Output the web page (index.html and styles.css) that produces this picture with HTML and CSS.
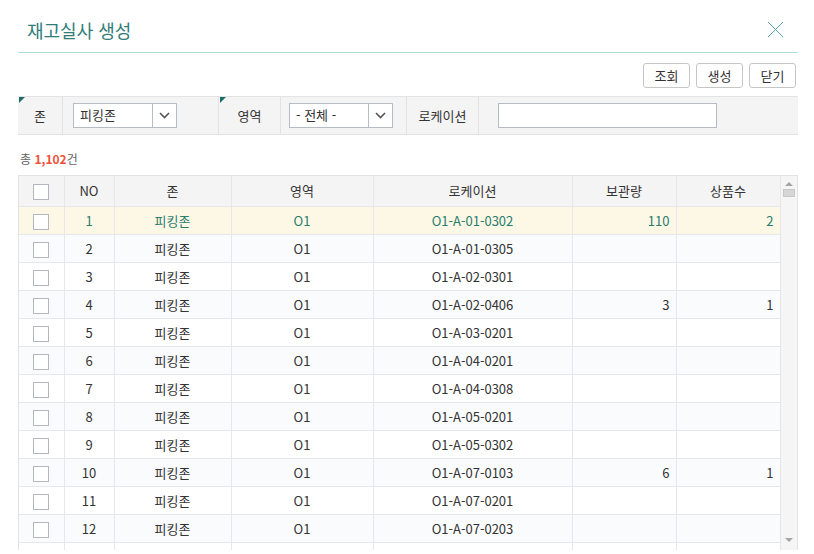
FILE: index.html
```html
<!DOCTYPE html>
<html lang="ko">
<head>
<meta charset="utf-8">
<title>재고실사 생성</title>
<link rel="stylesheet" href="styles.css">
</head>
<body>
<div class="dialog">
  <div class="dlg-head">
    <h1 class="dlg-title">재고실사 생성</h1>
    <button class="dlg-close" aria-label="닫기">
      <svg width="17" height="17" viewBox="0 0 17 17"><path d="M1 1L16 16M16 1L1 16" stroke="#5aa6a2" stroke-width="1" fill="none"/></svg>
    </button>
  </div>

  <div class="toolbar">
    <button class="btn">조회</button>
    <button class="btn">생성</button>
    <button class="btn">닫기</button>
  </div>

  <div class="filter">
    <div class="f-label req w-zone">존</div>
    <div class="f-field w-zone-f">
      <div class="select"><span class="sel-text">피킹존</span><span class="sel-arrow"><svg width="11" height="7" viewBox="0 0 11 7"><path d="M1 1L5.5 5.5L10 1" stroke="#555" stroke-width="1.6" fill="none"/></svg></span></div>
    </div>
    <div class="f-label req w-area">영역</div>
    <div class="f-field w-area-f">
      <div class="select"><span class="sel-text">- 전체 -</span><span class="sel-arrow"><svg width="11" height="7" viewBox="0 0 11 7"><path d="M1 1L5.5 5.5L10 1" stroke="#555" stroke-width="1.6" fill="none"/></svg></span></div>
    </div>
    <div class="f-label w-loc">로케이션</div>
    <div class="f-field w-loc-f">
      <input class="text-input" type="text">
    </div>
  </div>

  <div class="count">총 <b>1,102</b>건</div>

  <div class="grid">
    <div class="grid-body">
      <table>
        <colgroup>
          <col class="c-chk"><col class="c-no"><col class="c-zone"><col class="c-area"><col class="c-loc"><col class="c-qty"><col class="c-cnt">
        </colgroup>
        <thead>
          <tr><th><span class="chk"></span></th><th>NO</th><th>존</th><th>영역</th><th>로케이션</th><th>보관량</th><th>상품수</th></tr>
        </thead>
        <tbody>
          <tr class="sel"><td><span class="chk"></span></td><td>1</td><td>피킹존</td><td>O1</td><td>O1-A-01-0302</td><td class="num">110</td><td class="num">2</td></tr>
          <tr><td><span class="chk"></span></td><td>2</td><td>피킹존</td><td>O1</td><td>O1-A-01-0305</td><td class="num"></td><td class="num"></td></tr>
          <tr><td><span class="chk"></span></td><td>3</td><td>피킹존</td><td>O1</td><td>O1-A-02-0301</td><td class="num"></td><td class="num"></td></tr>
          <tr><td><span class="chk"></span></td><td>4</td><td>피킹존</td><td>O1</td><td>O1-A-02-0406</td><td class="num">3</td><td class="num">1</td></tr>
          <tr><td><span class="chk"></span></td><td>5</td><td>피킹존</td><td>O1</td><td>O1-A-03-0201</td><td class="num"></td><td class="num"></td></tr>
          <tr><td><span class="chk"></span></td><td>6</td><td>피킹존</td><td>O1</td><td>O1-A-04-0201</td><td class="num"></td><td class="num"></td></tr>
          <tr><td><span class="chk"></span></td><td>7</td><td>피킹존</td><td>O1</td><td>O1-A-04-0308</td><td class="num"></td><td class="num"></td></tr>
          <tr><td><span class="chk"></span></td><td>8</td><td>피킹존</td><td>O1</td><td>O1-A-05-0201</td><td class="num"></td><td class="num"></td></tr>
          <tr><td><span class="chk"></span></td><td>9</td><td>피킹존</td><td>O1</td><td>O1-A-05-0302</td><td class="num"></td><td class="num"></td></tr>
          <tr><td><span class="chk"></span></td><td>10</td><td>피킹존</td><td>O1</td><td>O1-A-07-0103</td><td class="num">6</td><td class="num">1</td></tr>
          <tr><td><span class="chk"></span></td><td>11</td><td>피킹존</td><td>O1</td><td>O1-A-07-0201</td><td class="num"></td><td class="num"></td></tr>
          <tr><td><span class="chk"></span></td><td>12</td><td>피킹존</td><td>O1</td><td>O1-A-07-0203</td><td class="num"></td><td class="num"></td></tr>
          <tr class="partial"><td><span class="chk"></span></td><td></td><td></td><td></td><td></td><td class="num"></td><td class="num"></td></tr>
        </tbody>
      </table>
    </div>
    <div class="vscroll">
      <span class="arr-up"></span>
      <span class="thumb"></span>
      <span class="spacer"></span>
      <span class="arr-down"></span>
    </div>
  </div>
</div>
</body>
</html>
```

FILE: styles.css
```css
* { box-sizing: border-box; }
html, body { margin: 0; padding: 0; background: #fff; }
body {
  font-family: "Noto Sans CJK KR", "Noto Sans", sans-serif;
  font-size: 13px;
  color: #333;
  overflow: hidden;
}
.dialog {
  width: 780px;
  margin-left: 18px;
  height: 554px;
  display: flex;
  flex-direction: column;
}
.dlg-head {
  height: 53px;
  border-bottom: 1px solid #abdfd8;
  display: flex;
  align-items: center;
  justify-content: space-between;
  padding: 0 14px 0 9px;
}
.dlg-title {
  margin: 0;
  font-size: 18px;
  font-weight: 400;
  color: #2f7c78;
  line-height: 24px;
  padding-top: 7px;
}
.dlg-close {
  border: 0;
  background: none;
  padding: 0;
  width: 17px;
  height: 17px;
  margin-top: 7px;
  display: flex;
}
.toolbar {
  display: flex;
  justify-content: flex-end;
  gap: 6px;
  padding: 10px 2px 0 0;
}
.btn {
  width: 47px;
  height: 25px;
  border: 1px solid #c6c6c6;
  border-radius: 3px;
  background: #fff;
  font-family: inherit;
  font-size: 13px;
  color: #333;
  padding: 0;
  line-height: 22px;
}
.filter {
  margin-top: 8px;
  height: 39px;
  background: #f4f4f4;
  border-top: 1px solid #e3e3e3;
  border-bottom: 1px solid #e3e3e3;
  display: flex;
}
.f-label {
  position: relative;
  display: flex;
  align-items: center;
  justify-content: center;
  border-right: 1px solid #e2e2e2;
  color: #333;
}
.f-label.req::before {
  content: "";
  position: absolute;
  left: 1px;
  top: 0;
  border-top: 6px solid #1e6d69;
  border-right: 6px solid transparent;
}
.f-field {
  display: flex;
  align-items: center;
  border-right: 1px solid #e2e2e2;
}
.w-zone { width: 45px; }
.w-zone-f { width: 156px; padding-left: 10px; }
.w-area { width: 62px; }
.w-area-f { width: 126px; padding-left: 8px; }
.w-loc { width: 72px; }
.w-loc-f { flex: 1; padding-left: 19px; border-right: 0; }
.select {
  width: 104px;
  height: 25px;
  border: 1px solid #b7bbc5;
  background: #fff;
  display: flex;
}
.sel-text {
  flex: 1;
  padding-left: 6px;
  line-height: 22px;
}
.sel-arrow {
  width: 24px;
  border-left: 1px solid #b7bbc5;
  display: flex;
  align-items: center;
  justify-content: center;
}
.text-input {
  width: 219px;
  height: 25px;
  border: 1px solid #b7bbc5;
  background: #fff;
  margin: 0;
}
.count {
  font-size: 12px;
  color: #666;
  padding: 15px 0 0 2px;
  line-height: 18px;
  height: 40px;
}
.count b { color: #f0533a; font-weight: 700; }
.grid {
  display: flex;
  height: 375px;
  border: 1px solid #e3e3e3;
  border-bottom: 0;
}
.grid-body {
  width: 761px;
  overflow: hidden;
}
table {
  border-collapse: collapse;
  table-layout: fixed;
  width: 761px;
}
.c-chk { width: 45px; }
.c-no { width: 50px; }
.c-zone { width: 117px; }
.c-area { width: 142px; }
.c-loc { width: 199px; }
.c-qty { width: 104px; }
.c-cnt { width: 104px; }
th, td {
  border: 1px solid #e6e7ea;
  text-align: center;
  padding: 0 6px;
  font-weight: 400;
  white-space: nowrap;
}
tr > :first-child { border-left: 0; }
thead tr > th { border-top: 0; }
th {
  height: 30px;
  background: #f4f4f4;
  color: #333;
}
td {
  height: 28px;
  color: #333;
}
td.num { text-align: right; }
tbody tr:nth-child(even) { background: #fafbfd; }
tbody tr.sel { background: #fdf8e5; }
tbody tr.sel td { color: #2a7c6d; }
.chk {
  display: inline-block;
  width: 16px;
  height: 16px;
  border: 1px solid #b3b6bf;
  background: #fff;
  vertical-align: middle;
}
.vscroll {
  flex: 1;
  background: #f5f5f5;
  border-left: 1px solid #e6e6e6;
  display: flex;
  flex-direction: column;
  align-items: center;
  padding: 6px 0 8px;
}
.arr-up {
  border-bottom: 4px solid #a5a5a5;
  border-left: 4px solid transparent;
  border-right: 4px solid transparent;
}
.thumb {
  width: 12px;
  height: 8px;
  margin-top: 3px;
  background: #d6d6d6;
  border: 1px solid #c8c8c8;
}
.spacer { flex: 1; }
.arr-down {
  border-top: 4px solid #a5a5a5;
  border-left: 4px solid transparent;
  border-right: 4px solid transparent;
}
```
